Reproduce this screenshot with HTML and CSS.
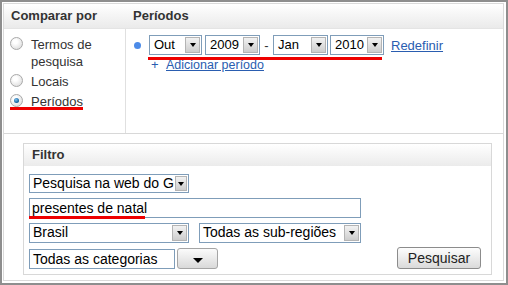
FILE: index.html
```html
<!DOCTYPE html>
<html lang="pt">
<head>
    <meta charset="UTF-8">
    <title>Comparar por períodos</title>
    <link rel="stylesheet" href="styles.css">
</head>
<body>
    <div class="frame">
        <div class="inner">
            <div class="compare">
                <div class="compare-head">
                    <div class="head-left">Comparar por</div>
                    <div class="head-right">Períodos</div>
                </div>
                <div class="compare-body">
                    <ul class="modes">
                        <li><span class="radio"></span><span>Termos de<br>pesquisa</span></li>
                        <li><span class="radio"></span><span>Locais</span></li>
                        <li><span class="radio checked"></span><span>Períodos</span></li>
                        <!-- red annotation under the selected mode -->
                        <span class="redline red-mode"></span>
                    </ul>
                    <div class="periods">
                        <div class="period-row">
                            <span class="dot"></span>
                            <span class="sel w-out"><span class="sel-text">Out</span><span class="arrow"></span></span>
                            <span class="sel w-2009"><span class="sel-text">2009</span><span class="arrow"></span></span>
                            <span class="dash">-</span>
                            <span class="sel w-jan"><span class="sel-text">Jan</span><span class="arrow"></span></span>
                            <span class="sel w-2010"><span class="sel-text">2010</span><span class="arrow"></span></span>
                            <a class="link reset" href="#">Redefinir</a>
                        </div>
                        <div class="add">
                            <span class="plus">+</span>
                            <a class="link small" href="#">Adicionar período</a>
                        </div>
                        <span class="redline red-period"></span>
                    </div>
                </div>
            </div>

            <div class="filter">
                <div class="filter-head">Filtro</div>
                <div class="filter-body">
                    <div class="frow">
                        <span class="sel big w-web"><span class="sel-text">Pesquisa na web do Google</span><span class="arrow narrow"></span></span>
                    </div>
                    <div class="frow">
                        <span class="textbox">presentes de natal</span>
                        <span class="redline red-term"></span>
                    </div>
                    <div class="frow gap">
                        <span class="sel big w-country"><span class="sel-text">Brasil</span><span class="arrow"></span></span>
                        <span class="sel big w-region"><span class="sel-text">Todas as sub-regiões</span><span class="arrow"></span></span>
                    </div>
                    <div class="frow last">
                        <span class="catbox">Todas as categorias</span>
                        <span class="catbtn"><span class="tri"></span></span>
                        <span class="search">Pesquisar</span>
                    </div>
                </div>
            </div>
        </div>
    </div>
</body>
</html>
```

FILE: styles.css
```css
body {
    margin: 0;
    padding: 0;
    background-color: #FFFFFF;
}
.frame {
    width: 508px;
    height: 285px;
    box-sizing: border-box;
    border: 2px solid #8E8E8E;
    padding: 1px 2px 2px 1px;
    font-family: "Liberation Sans", Arial, sans-serif;
    color: #333333;
}
.inner {
    height: 100%;
    box-sizing: border-box;
    border: 1px solid #DADADA;
}

/* top block: compare by / periods */
.compare {
    border-bottom: 1px solid #D8D8D8;
}
.compare-head {
    display: flex;
    height: 24px;
    background: linear-gradient(#FFFFFF, #EAEAEA);
    border-bottom: 1px solid #E4E4E4;
    font: 700 13px/24px "Liberation Sans", Arial, sans-serif;
}
.head-left {
    width: 122px;
    padding-left: 7px;
    box-sizing: border-box;
}
.head-right {
    padding-left: 7px;
}
.compare-body {
    display: flex;
    height: 104px;
}
.modes {
    position: relative;
    list-style: none;
    margin: 0;
    padding: 7px 0 0 6px;
    width: 122px;
    box-sizing: border-box;
    border-right: 1px solid #E0E0E0;
    font-size: 13px;
    line-height: 17px;
}
.modes li {
    display: flex;
    gap: 8px;
    margin-bottom: 3px;
}
.radio {
    flex: none;
    width: 11px;
    height: 11px;
    margin-top: 1px;
    border: 1px solid #A9A9A9;
    border-radius: 50%;
    background: radial-gradient(circle at 40% 35%, #FFFFFF 20%, #D4D4D4 100%);
    position: relative;
}
.radio.checked::after {
    content: "";
    position: absolute;
    left: 3px;
    top: 3px;
    width: 5px;
    height: 5px;
    border-radius: 50%;
    background: radial-gradient(circle at 40% 35%, #7FC2EE, #0E5C99 70%);
}
.periods {
    position: relative;
    padding: 6px 0 0 8px;
    font-size: 13px;
}
.period-row {
    display: flex;
    align-items: center;
    height: 20px;
}
.dot {
    width: 7px;
    height: 7px;
    border-radius: 50%;
    background-color: #4C8BE8;
    margin-right: 8px;
}
.sel {
    display: flex;
    height: 20px;
    box-sizing: border-box;
    border: 1px solid #7F9DB9;
    background-color: #FFFFFF;
    color: #000000;
    margin-right: 3px;
}
.sel-text {
    flex: 1;
    overflow: hidden;
    white-space: nowrap;
    padding-left: 4px;
    line-height: 18px;
}
.arrow {
    flex: none;
    width: 15px;
    margin: 1px;
    box-sizing: border-box;
    border: 1px solid #B4B4B4;
    background: linear-gradient(#F2F2F2, #CDCDCD);
    position: relative;
}
.arrow::after {
    content: "";
    position: absolute;
    left: 50%;
    top: 50%;
    margin: -2px 0 0 -3px;
    border-left: 3px solid transparent;
    border-right: 3px solid transparent;
    border-top: 4px solid #000000;
}
.arrow.narrow {
    width: 12px;
}
.w-out { width: 53px; }
.w-2009 { width: 55px; margin-right: 0; }
.w-jan { width: 55px; margin-right: 2px; }
.w-2010 { width: 54px; margin-right: 0; }
.dash {
    width: 13px;
    text-align: center;
    color: #333333;
}
.link {
    color: #2A5DB0;
    text-decoration: underline;
}
.reset {
    margin-left: 7px;
}
.add {
    margin: 2px 0 0 17px;
    display: flex;
    align-items: baseline;
    line-height: 15px;
}
.plus {
    color: #2A5DB0;
    width: 15px;
}
.small {
    font-size: 12.5px;
}
.redline {
    position: absolute;
    height: 3px;
    background-color: #EE0000;
}
.red-mode {
    left: 6px;
    top: 78px;
    width: 73px;
}
.red-period {
    left: 22px;
    top: 28px;
    width: 234px;
}

/* filter block */
.filter {
    width: 469px;
    height: 132px;
    box-sizing: border-box;
    margin: 9px 0 0 19px;
    border: 1px solid #D8D8D8;
}
.filter-head {
    height: 22px;
    padding-left: 8px;
    background: linear-gradient(#FFFFFF, #EBEBEB);
    font: 700 13px/22px "Liberation Sans", Arial, sans-serif;
}
.filter-body {
    padding: 8px 10px 0 5px;
    font-size: 14px;
}
.frow {
    position: relative;
    display: flex;
    margin-bottom: 5px;
}
.frow.gap .sel {
    margin-right: 10px;
}
.sel.big {
    height: 19px;
}
.sel.big .sel-text {
    line-height: 17px;
    padding-left: 3px;
}
.w-web { width: 160px; }
.w-country { width: 160px; height: 20px !important; }
.w-region { width: 162px; height: 20px !important; }
.textbox {
    width: 332px;
    height: 20px;
    box-sizing: border-box;
    border: 1px solid #7F9DB9;
    padding-left: 2px;
    line-height: 18px;
    color: #000000;
}
.red-term {
    left: 0;
    top: 18px;
    width: 116px;
}
.frow.last {
    margin-top: -1px;
    align-items: flex-end;
}
.catbox {
    width: 146px;
    height: 20px;
    box-sizing: border-box;
    border: 1px solid #7F9DB9;
    padding-left: 3px;
    line-height: 18px;
    color: #000000;
}
.catbtn {
    width: 41px;
    height: 21px;
    box-sizing: border-box;
    margin-left: 2px;
    border: 1px solid #A5A5A5;
    border-radius: 3px;
    background: linear-gradient(#FBFBFB, #D9D9D9);
    position: relative;
}
.tri {
    position: absolute;
    left: 15px;
    top: 9px;
    border-left: 5px solid transparent;
    border-right: 5px solid transparent;
    border-top: 5px solid #000000;
}
.search {
    margin-left: auto;
    width: 84px;
    height: 22px;
    box-sizing: border-box;
    border: 1px solid #8C8C8C;
    border-radius: 3px;
    background: linear-gradient(#FDFDFD, #DADADA);
    text-align: center;
    line-height: 20px;
    color: #222222;
}
```
